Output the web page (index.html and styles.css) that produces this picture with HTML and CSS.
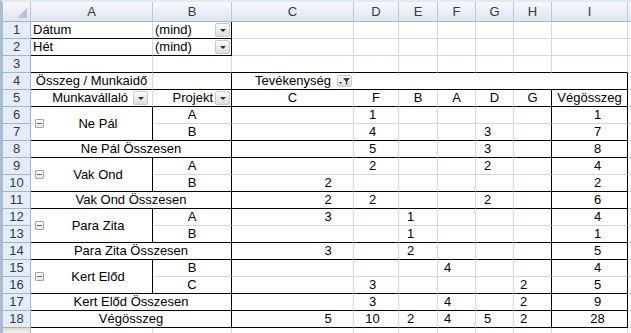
FILE: index.html
```html
<!DOCTYPE html>
<html lang="hu">
<head>
    <meta charset="UTF-8">
    <meta name="viewport" content="width=device-width, initial-scale=1.0">
    <title>Kimutatás - Munkaidő</title>
    <link rel="stylesheet" href="styles.css">
</head>
<body>

    <div class="sheet">
        <table class="grid">
            <colgroup>
                <col class="w-rh"><col class="w-a"><col class="w-b"><col class="w-c"><col class="w-d">
                <col class="w-e"><col class="w-f"><col class="w-g"><col class="w-h"><col class="w-i"><col class="w-j">
            </colgroup>

            <tr class="colhead">
                <th class="corner"><span class="tri"></span></th>
                <th>A</th><th>B</th><th>C</th><th>D</th><th>E</th><th>F</th><th>G</th><th>H</th><th>I</th><th class="j"></th>
            </tr>

            <tr>
                <th class="rh">1</th>
                <td class="txt bb">Dátum</td>
                <td class="bb br"><div class="sel">(mind)<span class="dd"></span></div></td>
                <td></td><td></td><td></td><td></td><td></td><td></td><td></td><td class="j"></td>
            </tr>
            <tr>
                <th class="rh">2</th>
                <td class="txt bb">Hét</td>
                <td class="bb br"><div class="sel">(mind)<span class="dd"></span></div></td>
                <td></td><td></td><td></td><td></td><td></td><td></td><td></td><td class="j"></td>
            </tr>
            <tr>
                <th class="rh">3</th>
                <td class="bb"></td><td class="bb"></td><td class="bb"></td><td class="bb"></td><td class="bb"></td>
                <td class="bb"></td><td class="bb"></td><td class="bb"></td><td class="bb"></td><td class="j"></td>
            </tr>
            <tr>
                <th class="rh">4</th>
                <td class="c bb">Összeg / Munkaidő</td>
                <td class="bb br"></td>
                <td colspan="7" class="bb br"><div class="colfield">Tevékenység<span class="fbtn"><svg width="13" height="11" viewBox="0 0 13 11"><path d="M1 6h3L2.5 8z" fill="#333"/><path d="M5 2h7L9.2 5.5V9L7.8 8.2V5.5z" fill="#3a3f46"/></svg></span></div></td>
                <td class="j"></td>
            </tr>
            <tr>
                <th class="rh">5</th>
                <td class="bb"><div class="hdr hdr-a">Munkavállaló<span class="dd"></span></div></td>
                <td class="bb br"><div class="hdr hdr-b">Projekt<span class="dd"></span></div></td>
                <td class="c bb">C</td><td class="c bb">F</td><td class="c bb">B</td><td class="c bb">A</td>
                <td class="c bb">D</td><td class="c bb br">G</td><td class="c bb br">Végösszeg</td><td class="j"></td>
            </tr>

            <!-- Ne Pál -->
            <tr>
                <th class="rh">6</th>
                <td rowspan="2" class="mid bb br"><div class="emp"><span class="mn"></span><span class="nm">Ne Pál</span></div></td>
                <td class="c br">A</td>
                <td class="nc"></td><td class="nd">1</td><td class="ne"></td><td class="nf"></td><td class="ng"></td><td class="nh br"></td><td class="ni br">1</td><td class="j"></td>
            </tr>
            <tr>
                <th class="rh">7</th>
                <td class="c bb br">B</td>
                <td class="nc bb"></td><td class="nd bb">4</td><td class="ne bb"></td><td class="nf bb"></td><td class="ng bb">3</td><td class="nh bb br"></td><td class="ni bb br">7</td><td class="j"></td>
            </tr>
            <tr>
                <th class="rh">8</th>
                <td colspan="2" class="c bb br">Ne Pál Összesen</td>
                <td class="nc bb"></td><td class="nd bb">5</td><td class="ne bb"></td><td class="nf bb"></td><td class="ng bb">3</td><td class="nh bb br"></td><td class="ni bb br">8</td><td class="j"></td>
            </tr>

            <!-- Vak Ond -->
            <tr>
                <th class="rh">9</th>
                <td rowspan="2" class="mid bb br"><div class="emp"><span class="mn"></span><span class="nm">Vak Ond</span></div></td>
                <td class="c br">A</td>
                <td class="nc"></td><td class="nd">2</td><td class="ne"></td><td class="nf"></td><td class="ng">2</td><td class="nh br"></td><td class="ni br">4</td><td class="j"></td>
            </tr>
            <tr>
                <th class="rh">10</th>
                <td class="c bb br">B</td>
                <td class="nc bb">2</td><td class="nd bb"></td><td class="ne bb"></td><td class="nf bb"></td><td class="ng bb"></td><td class="nh bb br"></td><td class="ni bb br">2</td><td class="j"></td>
            </tr>
            <tr>
                <th class="rh">11</th>
                <td colspan="2" class="c bb br">Vak Ond Összesen</td>
                <td class="nc bb">2</td><td class="nd bb">2</td><td class="ne bb"></td><td class="nf bb"></td><td class="ng bb">2</td><td class="nh bb br"></td><td class="ni bb br">6</td><td class="j"></td>
            </tr>

            <!-- Para Zita -->
            <tr>
                <th class="rh">12</th>
                <td rowspan="2" class="mid bb br"><div class="emp"><span class="mn"></span><span class="nm">Para Zita</span></div></td>
                <td class="c br">A</td>
                <td class="nc">3</td><td class="nd"></td><td class="ne">1</td><td class="nf"></td><td class="ng"></td><td class="nh br"></td><td class="ni br">4</td><td class="j"></td>
            </tr>
            <tr>
                <th class="rh">13</th>
                <td class="c bb br">B</td>
                <td class="nc bb"></td><td class="nd bb"></td><td class="ne bb">1</td><td class="nf bb"></td><td class="ng bb"></td><td class="nh bb br"></td><td class="ni bb br">1</td><td class="j"></td>
            </tr>
            <tr>
                <th class="rh">14</th>
                <td colspan="2" class="c bb br">Para Zita Összesen</td>
                <td class="nc bb">3</td><td class="nd bb"></td><td class="ne bb">2</td><td class="nf bb"></td><td class="ng bb"></td><td class="nh bb br"></td><td class="ni bb br">5</td><td class="j"></td>
            </tr>

            <!-- Kert Előd -->
            <tr>
                <th class="rh">15</th>
                <td rowspan="2" class="mid bb br"><div class="emp"><span class="mn"></span><span class="nm">Kert Előd</span></div></td>
                <td class="c br">B</td>
                <td class="nc"></td><td class="nd"></td><td class="ne"></td><td class="nf">4</td><td class="ng"></td><td class="nh br"></td><td class="ni br">4</td><td class="j"></td>
            </tr>
            <tr>
                <th class="rh">16</th>
                <td class="c bb br">C</td>
                <td class="nc bb"></td><td class="nd bb">3</td><td class="ne bb"></td><td class="nf bb"></td><td class="ng bb"></td><td class="nh bb br">2</td><td class="ni bb br">5</td><td class="j"></td>
            </tr>
            <tr>
                <th class="rh">17</th>
                <td colspan="2" class="c bb br">Kert Előd Összesen</td>
                <td class="nc bb"></td><td class="nd bb">3</td><td class="ne bb"></td><td class="nf bb">4</td><td class="ng bb"></td><td class="nh bb br">2</td><td class="ni bb br">9</td><td class="j"></td>
            </tr>

            <tr>
                <th class="rh">18</th>
                <td colspan="2" class="c bb br">Végösszeg</td>
                <td class="nc bb">5</td><td class="nd bb">10</td><td class="ne bb">2</td><td class="nf bb">4</td><td class="ng bb">5</td><td class="nh bb br">2</td><td class="ni bb br">28</td><td class="j"></td>
            </tr>
            <tr class="last">
                <th class="rh rh-sel"></th>
                <td></td><td></td><td></td><td></td><td></td><td></td><td></td><td></td><td></td><td class="j"></td>
            </tr>
        </table>
    </div>

</body>
</html>
```

FILE: styles.css
```css
body {
    margin: 0;
    background: #fff;
    font-family: "Liberation Sans", Arial, sans-serif;
    font-size: 13px;
    color: #000;
    overflow: hidden;
}
.sheet {
    width: 628px;
    height: 331px;
    border-left: 3px solid #a9bcd4;
    border-top: 2px solid #e3e9f1;
    overflow: hidden;
}
.grid {
    width: 628px;
    table-layout: fixed;
    border-collapse: separate;
    border-spacing: 0;
}
.w-rh { width: 28px; }
.w-a { width: 122px; }
.w-b { width: 79px; }
.w-c { width: 122px; }
.w-d { width: 45px; }
.w-e { width: 39px; }
.w-f { width: 38px; }
.w-g { width: 38px; }
.w-h { width: 38px; }
.w-i { width: 76px; }
.w-j { width: 3px; }

td, th {
    padding: 0;
    height: 16px;
    line-height: 16px;
    white-space: nowrap;
    overflow: hidden;
    vertical-align: bottom;
    border-right: 1px solid #d0d7e5;
    border-bottom: 1px solid #d0d7e5;
    font-weight: normal;
}
.colhead th {
    height: 19px;
    vertical-align: middle;
    text-align: center;
    color: #333b47;
    background: linear-gradient(#f7f9fc, #dfe6ef);
    border-right-color: #b9c7d8;
    border-bottom-color: #9eb6ce;
}
.corner {
    position: relative;
    border-right-color: #9eb6ce;
}
.tri {
    position: absolute;
    right: 3px;
    bottom: 3px;
    width: 0;
    height: 0;
    border-left: 10px solid transparent;
    border-bottom: 10px solid #b5c5d8;
}
.rh {
    text-align: center;
    color: #333b47;
    background: #e4ecf7;
    border-right-color: #9eb6ce;
    border-bottom-color: #9eb6ce;
}
.rh-sel {
    background: linear-gradient(#f8d28c, #e4ecf7 3px);
}
.last td, .last th {
    height: 5px;
    border-bottom: 0;
}
.j {
    border-right: 0;
}
.colhead .j {
    border-right: 0;
}

.bb { border-bottom-color: #000; }
.br { border-right-color: #000; }
.c { text-align: center; }
.mid { vertical-align: middle; }
.txt { padding-left: 2px; }

/* value columns of the pivot */
.nc, .nd, .ne, .nf, .ng, .nh, .ni { text-align: center; }
.nc { padding-left: 71px; }
.nd { padding-right: 7px; }
.ne { padding-right: 15px; }
.nf { padding-right: 18px; }
.ng { padding-right: 14px; }
.nh { padding-right: 18px; }
.ni { padding-left: 16px; }

.sel {
    display: flex;
    align-items: center;
    justify-content: space-between;
    padding-left: 2px;
    padding-right: 1px;
}
.dd {
    position: relative;
    display: inline-block;
    width: 13px;
    height: 12px;
    border: 1px solid #c3cad4;
    border-radius: 2px;
    background: linear-gradient(#fbfbfc, #d9dee6);
}
.dd::after {
    content: "";
    position: absolute;
    left: 4px;
    top: 5px;
    border-left: 3px solid transparent;
    border-right: 3px solid transparent;
    border-top: 3px solid #2b2f36;
}
.hdr {
    display: flex;
    align-items: center;
    justify-content: flex-end;
}
.hdr-a { gap: 5px; padding-right: 4px; }
.hdr-b { gap: 2px; padding-right: 1px; }

.colfield {
    width: 121px;
    display: flex;
    align-items: center;
    justify-content: flex-end;
    gap: 6px;
    padding-right: 1px;
    box-sizing: border-box;
}
.fbtn {
    display: inline-block;
    width: 15px;
    height: 12px;
    border: 1px solid #c3cad4;
    border-radius: 2px;
    background: linear-gradient(#fbfbfc, #d9dee6);
    box-sizing: border-box;
}
.fbtn svg { display: block; margin: 0 auto; }

.emp {
    display: flex;
    align-items: center;
}
.mn {
    position: relative;
    width: 7px;
    height: 7px;
    margin-left: 4px;
    border: 1px solid #9aa3ae;
    border-radius: 1px;
    background: linear-gradient(#fff, #e3e7ec);
}
.mn::after {
    content: "";
    position: absolute;
    left: 1px;
    top: 3px;
    width: 5px;
    height: 1px;
    background: #5b6370;
}
.nm {
    flex: 1;
    text-align: center;
}
```
